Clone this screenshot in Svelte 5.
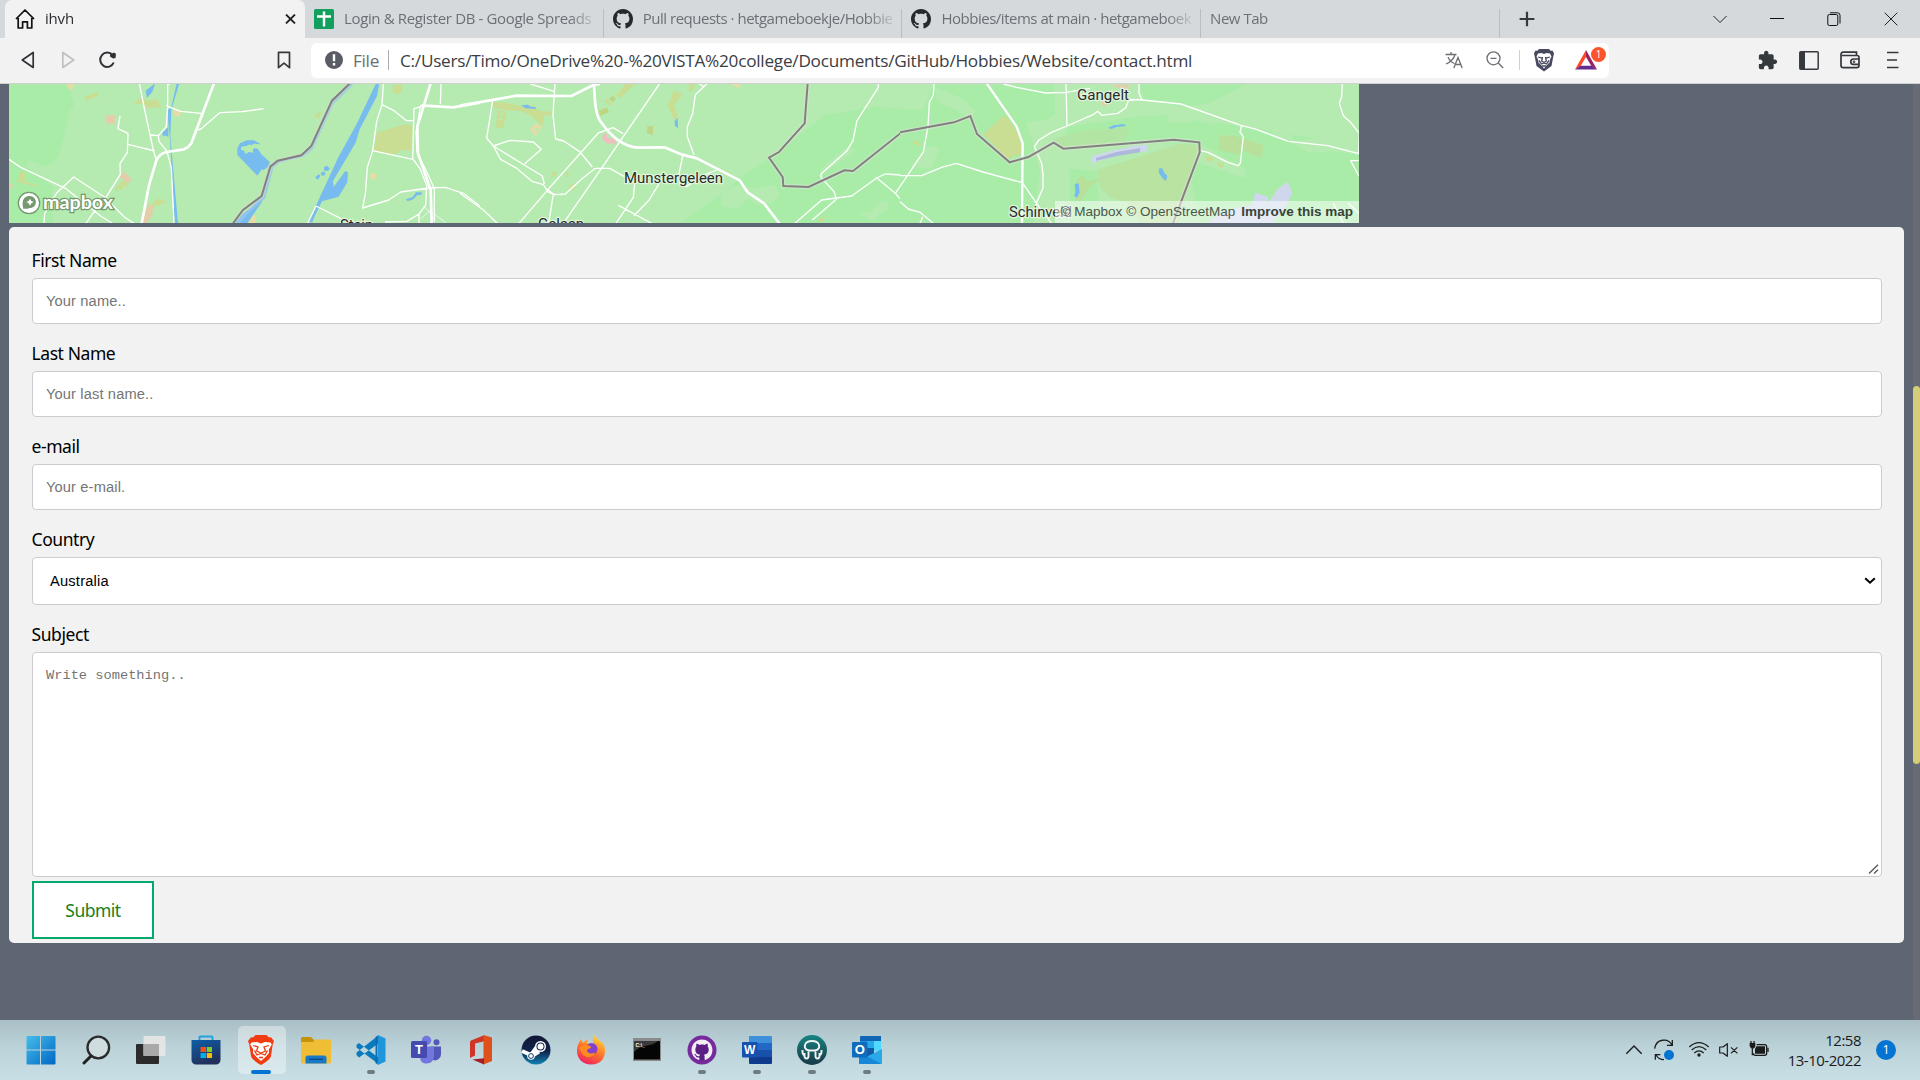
<script>
  const github =
    'M8 0C3.58 0 0 3.58 0 8c0 3.54 2.29 6.53 5.47 7.59.4.07.55-.17.55-.38 0-.19-.01-.82-.01-1.49-2.01.37-2.53-.49-2.69-.94-.09-.23-.48-.94-.82-1.13-.28-.15-.68-.52-.01-.53.63-.01 1.08.58 1.23.82.72 1.21 1.87.87 2.33.66.07-.52.28-.87.51-1.07-1.78-.2-3.64-.89-3.64-3.95 0-.87.31-1.59.82-2.15-.08-.2-.36-1.02.08-2.12 0 0 .67-.21 2.2.82.64-.18 1.32-.27 2-.27.68 0 1.36.09 2 .27 1.53-1.04 2.2-.82 2.2-.82.44 1.1.16 1.92.08 2.12.51.56.82 1.27.82 2.15 0 3.07-1.87 3.75-3.65 3.95.29.25.54.73.54 1.48 0 1.07-.01 1.93-.01 2.2 0 .21.15.46.55.38A8.013 8.013 0 0016 8c0-4.42-3.58-8-8-8z';

  const tabs = [
    { icon: 'sheet', title: 'Login & Register DB - Google Spreads', cls: 't1' },
    { icon: 'github', title: 'Pull requests · hetgameboekje/Hobbie', cls: 't2' },
    { icon: 'github', title: 'Hobbies/items at main · hetgameboek', cls: 't3' },
    { icon: '', title: 'New Tab', cls: 't4' }
  ];

  const fields = [
    { id: 'fname', label: 'First Name', hint: 'Your name..' },
    { id: 'lname', label: 'Last Name', hint: 'Your last name..' },
    { id: 'email', label: 'e-mail', hint: 'Your e-mail.' }
  ];

  const apps = [
    { id: 'start' }, { id: 'search' }, { id: 'tasks' }, { id: 'store' },
    { id: 'brave', active: true }, { id: 'files' }, { id: 'code', open: true },
    { id: 'teams' }, { id: 'office' }, { id: 'steam' }, { id: 'firefox' }, { id: 'cmd' },
    { id: 'ghdesk', open: true }, { id: 'word', open: true }, { id: 'kraken', open: true },
    { id: 'outlook', open: true }
  ];
</script>

<div class="screen">
  <header class="tabbar">
    <div class="tab active">
      <svg class="fav" width="20" height="20" viewBox="0 0 20 20" fill="none" stroke="#111" stroke-width="1.7" stroke-linejoin="round">
        <path d="M1 10 10 1l9 9M3.2 9v10h4.4v-6.2h4.8V19h4.4V9" />
      </svg>
      <span class="title">ihvh</span>
      <svg class="x" width="11" height="10" viewBox="0 0 11 10" stroke="#222" stroke-width="1.8"><path d="M1 .5l9 9M10 .5l-9 9" /></svg>
    </div>
    {#each tabs as t}
      <div class="tab {t.cls}">
        {#if t.icon === 'sheet'}
          <svg class="fav" width="20" height="20" viewBox="0 0 20 20"><rect width="20" height="20" rx="1.5" fill="#13a05f" /><path d="M8.8 2.500h2.400v3.800H17v2.400h-5.800V17.500H8.800V8.700H3V6.300h5.800z" fill="#fff" /></svg>
        {:else if t.icon === 'github'}
          <svg class="fav" width="20" height="20" viewBox="0 0 16 16"><path d={github} fill="#24292e" /></svg>
        {/if}
        <span class="title">{t.title}</span>
      </div>
    {/each}
    <svg class="plus" width="16" height="16" viewBox="0 0 16 16" stroke="#35383d" stroke-width="2.200"><path d="M8 .8v14.400M.6 8h14.800" /></svg>
    <div class="winctl">
      <svg width="14" height="14" viewBox="0 0 14 14" fill="none" stroke="#222"><path d="M.5 4 7 10.500 13.500 4" /></svg>
      <svg width="14" height="14" viewBox="0 0 14 14" fill="none" stroke="#111"><path d="M0 6.500h14" /></svg>
      <svg width="14" height="14" viewBox="0 0 14 14" fill="none" stroke="#111"><rect x=".8" y="2.500" width="10" height="11" rx="1.500" /><path d="M3 .8h7.500a2.500 2.500 0 0 1 2.500 2.500V11.500" /></svg>
      <svg width="14" height="14" viewBox="0 0 14 14" fill="none" stroke="#222"><path d="M.7.7l12.600 12.600M13.300.7.7 13.300" /></svg>
    </div>
  </header>

  <nav class="toolbar">
    <div class="navbtns">
      <svg width="14" height="18" viewBox="0 0 14 18" fill="none" stroke="#2f3237" stroke-width="1.700" stroke-linejoin="round"><path d="M12.200 1.500v15L1.300 9z" /></svg>
      <svg width="14" height="18" viewBox="0 0 14 18" fill="none" stroke="#bdbfc1" stroke-width="1.700" stroke-linejoin="round"><path d="M.8 1.500v15L11.700 9z" /></svg>
      <svg class="reload" width="19" height="18" viewBox="0 0 19 18" fill="none" stroke="#2f3237" stroke-width="2"><path d="M14.600 4.200A7 7.200 0 1 0 15.700 11.500" /><path d="M12 3.500 16 1.500l2 1.500-.5 4-2.500.5-3-2z" fill="#2f3237" stroke="none" /></svg>
      <svg class="mark" width="14" height="18" viewBox="0 0 14 18" fill="none" stroke="#35383d" stroke-width="1.700"><path d="M1.500 1.300h11v15.400L7 12.200l-5.500 4.500z" stroke-linejoin="round" /></svg>
    </div>
    <div class="omnibox">
      <svg width="18" height="18" viewBox="0 0 18 18"><circle cx="9" cy="9" r="9" fill="#5a5e64" /><path d="M7.800 3.200h2.400v7H7.800zM7.800 12h2.400v2.400H7.800z" fill="#fff" /></svg>
      <span class="scheme">File</span>
      <span class="bar"></span>
      <span class="url">C:/Users/Timo/OneDrive%20-%20VISTA%20college/Documents/GitHub/Hobbies/Website/contact.html</span>
      <div class="tools">
        <svg width="18" height="18" viewBox="0 0 18 18" fill="none" stroke="#6b6e73" stroke-width="1.300"><path d="M.5 3.500h11M6 1v2.500M10 3.500C9 7.500 5.500 11 1 13M3 6c1.500 3.500 4 5.500 6.500 6.500M8.800 17 13 6.500 17.200 17M10.200 13.500h5.600" /></svg>
        <svg width="18" height="18" viewBox="0 0 18 18" fill="none" stroke="#6b6e73" stroke-width="1.300"><circle cx="7.500" cy="7.300" r="6.500" /><path d="M12.200 12l5 5M4.500 7.300h6" /></svg>
        <span class="bar"></span>
        <svg width="22" height="24" viewBox="0 0 22 24"><path d="M6 1h10l1.500 1.700 2-.2L21 5.500l-1 4.500-1.500 8L11 23.500 3.500 18 2 10 1 5.500l1.500-3 2 .2z" fill="#47495f" /><path d="M5 5.500 8.500 5l2.500 1 2.500-1 3.500.5 1.500 3-1.500 3-.5 3-2.500 2.500L11 20.500 8 17l-2.500-2.500-.5-3-1.500-3z" fill="#fff" /><path d="M5 9l4 1.200M17 9l-4 1.200M9.500 9l-.8 4 2.300 1.500 2.300-1.500-.8-4M6 12.500l2.500 3.500L11 15l2.500 1 2.500-3.500M9 18h4" fill="none" stroke="#47495f" stroke-width="1.300" /></svg>
        <div class="bat">
          <svg width="24" height="20" viewBox="0 0 24 20"><path d="M12 0 1 19.500l5.500-3.200L12 7z" fill="#ff4724" /><path d="M12 0l11 19.500-5.500-3.200L12 7z" fill="#9e1f63" /><path d="M1 19.500h22l-5.500-3.800h-11z" fill="#662d91" /></svg>
          <span>1</span>
        </div>
      </div>
    </div>
    <div class="exts">
      <svg width="20" height="20" viewBox="1 0 23 23"><path fill="#35383d" d="M20.500 11H19V7c0-1.100-.9-2-2-2h-4V3.500C13 2.120 11.880 1 10.500 1S8 2.120 8 3.500V5H4c-1.100 0-1.990.9-1.990 2v3.800H3.500c1.490 0 2.700 1.210 2.700 2.700s-1.210 2.700-2.700 2.700H2V20c0 1.100.9 2 2 2h3.800v-1.500c0-1.490 1.210-2.700 2.700-2.700s2.700 1.210 2.700 2.700V22H17c1.100 0 2-.9 2-2v-4h1.500c1.380 0 2.500-1.120 2.500-2.500S21.880 11 20.500 11z" /></svg>
      <svg width="20" height="19" viewBox="0 0 20 19"><rect x=".8" y=".8" width="18.400" height="17.400" rx="1" fill="none" stroke="#35383d" stroke-width="1.500" /><path d="M1 1h5v17H1z" fill="#35383d" /></svg>
      <svg width="20" height="18" viewBox="0 0 20 18" fill="none" stroke="#35383d" stroke-width="1.700"><path d="M16.500 4V1.200H3a2 2 0 0 0-2 2v11.300a2.200 2.200 0 0 0 2.200 2.200H16.800a2.200 2.200 0 0 0 2.200-2.200V6.500A2 2 0 0 0 17 4.500H2" /><path d="M19 8h-5.500a2.700 2.700 0 0 0 0 5.400H19" /><circle cx="14" cy="10.700" r=".4" /></svg>
      <svg width="12" height="18" viewBox="0 0 12 18" stroke="#35383d" stroke-width="1.700"><path d="M0 1.500h11.500M0 9h10M0 16.500h11.500" /></svg>
    </div>
  </nav>

  <main class="page">
    <div class="map">
      <svg width="1350" height="139" viewBox="9 84 1350 139">
        <rect x="9" y="84" width="1350" height="139" fill="#b5ebb0" />
        <!-- western part -->
        <g transform="translate(0 80) scale(.33333)">
          <path fill="#a8eca8" d="M27 10H205L222 75 205 100 190 180 172 235 140 262 85 240 80 260 160 320 150 360 160 430H27z" />
          <g fill="#c9dd93">
            <path d="M400 72l20-18 25 8 25-5 15 25-45 2-8-12zM1130 158l85-26 22 6v75l-35-3-13 13-68-10zM58 275h18v30l40 10-5 5-57-14zM255 50l35-15 5 12-38 16zM1180 14h28l-3 22-14 7-15-8zM345 325l35-33 3 35-10-12-8 18-8-10-8 12zM440 380l38-25 22 14-45 12zM942 108l26-18-12 25z" />
          </g>
          <path fill="#e6dca6" d="M197 10h28l-14 24zM520 90l24 6-5 16-20-8zM1115 276l18 8-10 18-14-10zM745 430l10-25 14 2-4 23z" />
          <path fill="#e2cfa9" d="M318 106h28l-2 26-28-2zM370 275l26 22-12 14-26-20zM442 378l20-4-5 30-15 26h-18zM27 310l12 4-6 14-6-3z" />
          <g fill="#78bbee">
            <path d="M437 32l28-22-7 24-17 20zM530 10h8l-24 80-3 80 23 260h-10L510 180l-6-60-2-30 12-8zM487 158l18-17v30l-10-5-6 4z" />
            <path d="M712 204l8-14 20-9h22l20 12-20-2-14 8 26 8 10 16 26 24-6 14-14 10-4-4-14 20-60-62v-8zM1128 10h10l-7 38-52 100-12 40-68 115 2 18 35-48 8 4-2 30-26 43-50 14-22 45-7 18h-13l26-55 65-140 55-100z" />
            <path d="M972 262l8-5 9 8-4 7-12 1zM962 280l8-6 7 6-3 6-9 1zM947 290l9-7 5 4-6 11-7-1zM1218 358l20-7 10-14h17v7l-14 2-11 12-17 6zM700 430l30-30 22-15 32-40 2 20-44 65z" />
          </g>
          <path fill="#b5ebb0" d="M724 200l16-3 10-4 6 7 10 2-8 8 2 8-14-2-10 6-3-9-10-4z" />
          <path fill="none" stroke="#92c5ee" stroke-width="8" d="M1056 12 998 68l-62 136-26 22-72 18-22 18-24 90-55 50-32 40" />
          <path fill="none" stroke="#d0dfca" stroke-width="16" opacity=".5" d="M1050 10 996 62l-62 136-30 28-71 16-22 18-26 88-56 42-30 40" />
          <path fill="none" stroke="#83807f" stroke-width="6" d="M1050 10 996 62l-62 136-30 28-71 16-22 18-26 88-56 42-30 40" />
          <g fill="none" stroke="#fff" stroke-linejoin="round">
            <path stroke-width="4" d="M418 10l16 80 26 120 8 28M503 10v68l-4 62-24 27-23-2M475 167l2 17 24 30 13 50 8 166M511 10l-8 5M499 78l44 16 61 6M593 150l10-3 56-49 68-3 64-9M360 108l-6 38 30 14-2 57-22 34 1 32-45 72M384 193l80 20M27 238l35 24 136 64 104 82 35 22M132 430l2-30 35-60 52-49 92 60 60 60 28 19M258 430l25-36 20-34M1150 10l-4 64 36 18 38 30h20M1146 74l-16 50-12 88 120 26M1118 212l-16 50-6 80-8 42 78-24 36-24 84-12 50-2 54 18 50 38M948 378l80 40 26 12M948 378l-25 52M1155 426l66-2 36-22M1270 78l-28 8-4 150 22 30 20 50-3 60-20 26v28M1323 10l-2 62M1262 76l-14 80 3 60 34 70 18 40v100" />
            <path stroke-width="2" d="M1270 380l68 48M1263 416l24-22 14 24" />
            <path stroke-width="8" d="M642 10l-68 180q-10 14-22 18l-52 8q-22 5-31 25l-22 75-22 114M1292 10l-40 130 2 80 38 110 3 100M1264 76l95 6 81-14" />
          </g>
          <g>
            <circle cx="87" cy="369" r="34" fill="#75996f" /><circle cx="87" cy="369" r="30" fill="#fff" />
            <path d="M70 386c-5-20-2-37 18-38 27 1 26 37 0 36-7 4-11 2-18 2z" fill="#75996f" /><path d="M90 356l4 7 7 3-7 4-4 7-4-7-7-4 7-3z" fill="#fff" />
          </g>
        </g>
        <!-- central part -->
        <g transform="translate(460 80) scale(.33333)">
          <path fill="#a8eca8" d="M660 430l140-100 40-35 90-60 165-130 150-25 135 10V430z" />
          <path fill="#b5ebb0" d="M785 335l50-20 50 10 60-10 15 30-25 25-40 5-30-20-30 30-50-5zM1195 400l40-5 30-32 25 5-10 20-45 35zM1080 270l80-70 25 10-35 30-65 40z" />
          <g fill="#c9dd93"><path d="M98 65l40 3 50 12 30-5 22 18 36 2v10l-24 2-4 32-40-35-22-10-50-4-38-8zM112 90l28 5-10 50-22-3zM475 38l20-26h30l-45 42-14-8zM640 30l28 14-26 30 13 40-12 5-20-45 10-18zM688 10h18l-10 25-10-3zM270 292l10-20 10 5-4 12zM310 270l20 14-8 7zM326 320l12-8 10 10-14 12zM430 62l12-4 14 14-4 6zM1070 425l28-20-10 20z" /></g>
          <path fill="#bfd584" d="M416 92l25-10 5 14-25 12zM447 58l10-12 11 11-11 10zM562 139h17v25l-18-3zM1360 180l20 12v10l-20-10z" />
          <path fill="#e6dca6" d="M210 150l16-20 20 10-18 28zM806 10h35l-3 15z" />
          <path fill="#b5ebb0" d="M222 148l10-5 5 5-8 9zM120 97l10 2-2 8-10-2zM118 112l10 2-2 8-10-2z" />
          <path fill="#efbfbf" d="M432 160l9 3v8l12 5 16 2-4 16-10-4-12 2-18-16z" />
          <path fill="#78bbee" d="M183 76l20-2 10 6 14 1v6l-30-2zM644 122l9-8 1 30-9-6z" />
          <g fill="none" stroke="#fff" stroke-linejoin="round">
            <path stroke-width="4" d="M212 12l70 22M285 10l-6 95 8 72M98 62 80 174l20 24 22 40 50 28 44 38 34 10 14 22 22 8 30-2 50-46 40-31h43l75 42-4 45-56 84M100 198l50-17 70 5 24 22-50 43M100 198l147 90 6 24M262 328l18 14-14 88M287 177l24 6 48 32 38 46M177 430l90-105 148-166 44-16 30 18M310 430l118-170 170-248M475 376l100 54M522 407l46-48 34-56 50-20M668 228l-12 58 4 30 20 4 40-30 50-20M740 12l-34 32-8 56-16 40v30l20 54M718 12l14 8M1255 10v12l-64 100-12 60-18 30-78 70v10l40 44 6 22-72 62M1005 430l80-70 90-12 75-54 26-12 104 6M1380 230l-74 110M1248 292l58 48 40 46 34 15M0 340l70 50 42 40" />
            <path stroke-width="8" d="M0 77l170-30 164 1 66-33 20-3M402 12c2 60 6 100 24 118 20 30 60 72 112 73l75-1 54 22 44 11 128 66 25 37 48 32 55 72" />
          </g>
          <path fill="none" stroke="#e0e6dc" stroke-width="14" opacity=".5" d="M1043 10l-9 120-77 86-30 17 41 58 2 27 76 3 107-50 26 2 146-116 57-11" />
          <path fill="none" stroke="#83807f" stroke-width="6" d="M1043 10l-9 120-77 86-30 17 41 58 2 27 76 3 107-50 26 2 146-116 57-11" />
        </g>
        <!-- eastern part -->
        <g transform="translate(900 80) scale(.33333)">
          <path fill="#a8eca8" d="M0 95 70 90 100 10H460L466 100 430 130 380 140 400 190 420 280 400 430H60L0 370zM720 10H1040L930 70 850 80 730 60zM505 140l200-30 100-5 570 90V430H900L850 190 480 190zM510 265l80 10 10 155h-90z" />
          <path fill="#b5ebb0" d="M105 20l80 35 45 40-30 15-30-20-60-25zM380 125l70-6-10 60-50-10zM805 90l80 0 60 25v20l-60-15-20 10-60-5zM1060 105l40-5 10 35 60 5 10 45 100-18 95 22v35l-80-10-70 5-60-40-40-10-20-35zM30 260l50-60 40 2-25 65zM850 200l60-5 130 75-5 25-150-50-35-5z" />
          <path fill="#b8e3a0" d="M590 270l250-78 55 5-60 235H720l-30-60-60-20-30-30z" />
          <path fill="#c9dd93" d="M250 163l60-56 12 5 34 52 12 54-45 20zM40 178l24 14-5 8-20-10zM920 225l22 10-8 12-16-6zM954 242l17 14-4 7-16-5z" />
          <path fill="#b9e09b" d="M958 166l50 2 20 10-8 46-65-15zM1030 175l60 20-5 40-60-25zM530 300l20-15 10 20 45-10-40 30-20 40-20-5z" />
          <path fill="#b2e5a3" d="M460 178l80-25 145-12-10 45-190 18z" />
          <path fill="#e2cfa9" d="M640 14h46v25l-20-15-24-2zM600 65l16-8 6 18-14 3z" />
          <path fill="#cfd7ed" d="M576 228l70-18 55-12 40-4v20l-60 6-55 15-42 12-6 12zM920 430l40-30 60-20 35-2 10-40 40 12-5 25 35-50 28-20 14 35-20 40-40 50z" />
          <path fill="#aeb8db" d="M588 234l62-18 70-12v13l-65 10-67 15z" />
          <path fill="#78bbee" d="M624 144l16-8 32-4 6 6-28 3-15 6zM776 266l10-2 7 14 9 10-4 14-8-4-13-18zM524 312l12-2 3 28-9 16-7-6 3-15z" />
          <g fill="none" stroke="#fff" stroke-linejoin="round">
            <path stroke-width="4" d="M102 10l-2 35-12 22-4 73-14 76L0 320M0 287h65l60-25 44-12 80 26 118 32 48 70 40 52M0 365l25 22 35 10 40 33M68 410l-8 20M310 12l40 10 87 17 61-2 72-12M498 10l3 128M717 10v30l8 18-40 4-8 22-24 16-48 6-12-12-12 9-80 35-48 20-36 22-14 20 22 50 4 34v40l-26 60M688 58l40 2 115 12 180 64 46 12 96 36 118 13 94 24M1025 136l-5 20 10 14-9 80-7 7-30-10-60-30-26-6M1327 10l-2 40-7 20 12 37 20 18 28 35-2 60M1376 242h-24l24 45M1300 370l30 60M1345 370l34 32" />
            <path stroke-width="7" d="M260 10l90 130 18 50-2 240" />
          </g>
          <path fill="none" stroke="#e0e6dc" stroke-width="14" opacity=".5" d="M0 157l162-30 49-19 20 54 98 85 56-16 76-43 29 18 331-27 77 8 1 30-80 213" />
          <path fill="none" stroke="#83807f" stroke-width="6" d="M0 157l162-30 49-19 20 54 98 85 56-16 76-43 29 18 331-27 77 8 1 30-80 213" />
        </g>
        <g class="places">
          <text x="624" y="182.500" textLength="99" lengthAdjust="spacingAndGlyphs">Munstergeleen</text>
          <text x="1077" y="100" textLength="52" lengthAdjust="spacingAndGlyphs">Gangelt</text>
          <text x="1009" y="217" textLength="63" lengthAdjust="spacingAndGlyphs">Schinveld</text>
          <text x="340" y="230" textLength="33" lengthAdjust="spacingAndGlyphs">Stein</text>
          <text x="538" y="229" textLength="46" lengthAdjust="spacingAndGlyphs">Geleen</text>
        </g>
        <text class="mapbox" x="43" y="208.500" textLength="70" lengthAdjust="spacingAndGlyphs">mapbox</text>
      </svg>
      <div class="attrib"><span>© Mapbox</span><span>© OpenStreetMap</span><b>Improve this map</b></div>
    </div>

    <form class="form" onsubmit={(e) => e.preventDefault()}>
      {#each fields as f}
        <div class="field">
          <label for={f.id}>{f.label}</label>
          <input id={f.id} type="text" placeholder={f.hint} />
        </div>
      {/each}
      <div class="field">
        <label for="country">Country</label>
        <div class="pick">
          <select id="country"><option>Australia</option></select>
          <svg width="12" height="8" viewBox="0 0 12 8" fill="none" stroke="#000" stroke-width="2"><path d="M1.200 1.300 6 5.700l4.800-4.400" /></svg>
        </div>
      </div>
      <div class="field last">
        <label for="subject">Subject</label>
        <div class="area">
          <textarea id="subject" placeholder="Write something.."></textarea>
          <svg width="11" height="10" viewBox="0 0 11 10" stroke="#555" stroke-width="1.300"><path d="M1 9.500 10 .8M6 9.500l4-3.800" /></svg>
        </div>
      </div>
      <button type="submit">Submit</button>
    </form>
    <div class="scroll"><div class="thumb"></div></div>
  </main>

  <footer class="taskbar">
    <div class="apps">
      {#each apps as a}
        <div class="app" class:active={a.active} class:open={a.open}>
          <svg width="30" height="30" viewBox="0 0 30 30">
            {#if a.id === 'start'}
              <defs><linearGradient id="win" x1="0" y1="0" x2="1" y2="1"><stop offset="0" stop-color="#46bdea" /><stop offset="1" stop-color="#0067c5" /></linearGradient></defs>
              <path fill="url(#win)" d="M.500 2a1 1 0 0 1 1-1h12.500v13.500H.500zM15 1H28.500a1 1 0 0 1 1 1v12.500H15zM.500 15.500h13.500v14H1.500a1 1 0 0 1-1-1zM15 15.500h14.500v13a1 1 0 0 1-1 1H15z" />
            {:else if a.id === 'search'}
              <circle cx="17.300" cy="12.500" r="10.800" fill="#cfdde0" stroke="#2b2b2b" stroke-width="2.300" /><path d="M10 21 3 28" stroke="#222" stroke-width="3" stroke-linecap="round" />
            {:else if a.id === 'tasks'}
              <rect x="0" y="9" width="23" height="20" rx="1" fill="#2b2b2b" /><rect x="7.500" y="1" width="22" height="20" rx="1" fill="#e6e6e6" opacity=".93" /><rect x="7.500" y="9" width="15.500" height="12" fill="#a9a9a9" />
            {:else if a.id === 'store'}
              <defs><linearGradient id="st" x1="0" y1="0" x2=".4" y2="1"><stop offset="0" stop-color="#0b5fa8" /><stop offset="1" stop-color="#22305c" /></linearGradient></defs>
              <path d="M8.500 6V2.300q0-.8.8-.8h11.400q.8 0 .8.8V6" fill="none" stroke="#23a3dd" stroke-width="1.900" /><path d="M.5 5h29v20a4.500 4.500 0 0 1-4.500 4.500H5A4.500 4.500 0 0 1 .5 25z" fill="url(#st)" />
              <path d="M9.500 12H15v5H9.500z" fill="#f1511b" /><path d="M15.800 12H21v5h-5.200z" fill="#80cc28" /><path d="M9.500 18H15v5H9.500z" fill="#00adef" /><path d="M15.800 18H21v5h-5.200z" fill="#fbbc09" />
            {:else if a.id === 'brave'}
              <path d="M9.500 0h11l2.500 2.500 2-.3L28 6l-1.300 3.500L25 21c-.7 3-5 6-10 9C10 27 5.700 24 5 21L3.300 9.500 2 6l3-3.800 2 .3z" fill="#f03c10" />
              <path d="M5.500 7.500 11 7l4 1.500L19 7l5.500.5 1.300 2-3 5 .2 3.500-3.500 4-4.500 4-4.500-4L7 18l.2-3.500-3-5z" fill="#fff" /><path d="M7 10.500l5 1.500-1.500 4 4.500 2 4.500-2-1.500-4 5-1.500M8.500 15.500l2.500 4.500 4-1.500 4 1.500 2.500-4.500M13 22.500h4" fill="none" stroke="#f03c10" stroke-width="1.300" />
            {:else if a.id === 'files'}
              <path d="M0 3.500A1.500 1.500 0 0 1 1.500 2H10l3 3v8H0z" fill="#c69208" /><path d="M0 7h12l2-2.500h15.500a.5.500 0 0 1 .5.500v22.500a1 1 0 0 1-1 1H1a1 1 0 0 1-1-1z" fill="#efbe35" /><path d="M4.500 28.500V23a2.500 2.500 0 0 1 2.500-2.500h16a2.500 2.500 0 0 1 2.500 2.500v5.500z" fill="#1879c6" /><path d="M8 24.300h14" stroke="#0c4b87" stroke-width="1.400" />
            {:else if a.id === 'code'}
              <path d="M.5 10 3 8l20 15v6.500L.5 12.500zM.5 20l2.500 2.500L23 8V0L.5 17.500z" fill="#0a7abf" /><path d="M22 0l7.500 3.500v23L22 30z" fill="#1f96dc" /><path d="M21.500.5v29l-2-1.500V2z" fill="#0f6cb0" />
            {:else if a.id === 'teams'}
              <circle cx="15.500" cy="5.500" r="4.700" fill="#7177dc" /><circle cx="25.500" cy="7.300" r="3" fill="#5258b8" /><path d="M20 11.500h10v8a6 6 0 0 1-8 5.500z" fill="#5258b8" /><path d="M9 11.500h14v9c0 5-3 8-7.500 8S9 26 9 21z" fill="#7177dc" /><rect x="0" y="6" width="16" height="17" rx="1.500" fill="#444aae" /><text x="8" y="19" text-anchor="middle" class="g">T</text>
            {:else if a.id === 'office'}
              <path d="M18 .3 5 5.500q-1 .5-1 1.700V23l5-2.500V8.500l9-2.200z" fill="#cf3628" /><path d="M17.500 0 26 2.500V26l-8.500 3.500z" fill="#e0501b" /><path d="M6.500 24.500 18 23.300V29.500z" fill="#a51d28" />
            {:else if a.id === 'steam'}
              <defs><linearGradient id="sm" x1="0" y1="0" x2="0" y2="1"><stop offset="0" stop-color="#111636" /><stop offset=".55" stop-color="#11254d" /><stop offset="1" stop-color="#1284b4" /></linearGradient></defs>
              <circle cx="15" cy="15" r="14.500" fill="url(#sm)" /><path d="M1 16l9 4 5.500-7.500M10 21.500l8-5" stroke="#fff" stroke-width="4" fill="none" /><circle cx="19.500" cy="11.500" r="5.500" fill="#fff" /><circle cx="19.500" cy="11.500" r="4" fill="#11254d" /><circle cx="19.500" cy="11.500" r="3" fill="#fff" /><circle cx="10" cy="21" r="3.800" fill="#fff" /><circle cx="10" cy="21" r="2.400" fill="none" stroke="#12406b" />
            {:else if a.id === 'firefox'}
              <defs><linearGradient id="ff" x1=".8" y1="0" x2=".3" y2="1"><stop offset="0" stop-color="#ffe03a" /><stop offset=".5" stop-color="#ff7a28" /><stop offset="1" stop-color="#ef2063" /></linearGradient></defs>
              <path d="M19 0c1 4 4 4 6 7l2 1c3 5 2.500 12-.5 16.500C24 28 20 29.500 15 29.500 7 29.500 1 24 1 16c0-4 1-7 2.500-9l1-3L7 8q2-3 5-3.500l-1 4 7 .5c-2-3-1-7 1-9z" fill="url(#ff)" /><circle cx="15.500" cy="14" r="6" fill="#8441cf" /><path d="M3 13c3-3 5-2 7-3 3 0 5 1 5 2.500s-4 1-4 3c0 3 5 4 8 2-1 5-9 7-13 1z" fill="#ff8a1f" />
            {:else if a.id === 'cmd'}
              <rect x="1" y="3" width="28" height="23" fill="#8b8b8d" /><path d="M2 6h26v18.500H2z" fill="#050505" /><path d="M2 6h24C20 12 9 9 2 17z" fill="#3a3a3a" /><text x="3.500" y="11.500" class="g prompt">C:\_</text>
            {:else if a.id === 'ghdesk'}
              <circle cx="15" cy="15" r="14.500" fill="#762a9c" /><circle cx="15" cy="15" r="10.500" fill="#5b1e85" /><path transform="translate(4.500 4.500) scale(1.312)" d={github} fill="#f3edf6" />
            {:else if a.id === 'word'}
              <path d="M7 1h22a1 1 0 0 1 1 1v6H7z" fill="#3f8fdb" /><path d="M7 8h23v7H7z" fill="#2368c4" /><path d="M7 15h23v7H7z" fill="#1850ab" /><path d="M7 22h23v6a1 1 0 0 1-1 1H8a1 1 0 0 1-1-1z" fill="#103b8c" /><rect x="0" y="7" width="15.500" height="15.500" rx="1" fill="#1751b0" /><text x="7.700" y="19" text-anchor="middle" class="g w">W</text>
            {:else if a.id === 'kraken'}
              <defs><linearGradient id="kr" x1="0" y1="0" x2="0" y2="1"><stop offset="0" stop-color="#168581" /><stop offset="1" stop-color="#193847" /></linearGradient></defs>
              <circle cx="15" cy="15" r="15" fill="url(#kr)" /><path d="M9 14c-2-2-2-8 6-8s8 6 6 8c-1 2-11 2-12 0zM11.500 15.500v5.500q0 2.500-2 2.500t-2-2.500V18M18.500 15.500v5.500q0 2.500 2 2.500t2-2.500V18M5.500 15q-.5 4 2 5.500M24.500 15q.5 4-2 5.500" fill="none" stroke="#f4f4f4" stroke-width="1.900" />
            {:else}
              <path d="M8 2a1 1 0 0 1 1-1h20v14H8z" fill="#1066b4" /><path d="M8 6h7v7H8z" fill="#1490df" /><path d="M15 6h7v7h-7z" fill="#28a8ea" /><path d="M22 6h7v10h-7z" fill="#50d9ff" /><path d="M8 13h14v8H8z" fill="#0f5da8" /><path d="M16 21l14-7v14a1 1 0 0 1-1 1H8a1 1 0 0 1-1-1v-6z" fill="#2aa8e8" /><path d="M7 17l22.500 12H8a1 1 0 0 1-1-1z" fill="#1787d8" /><rect x="0" y="7" width="15.500" height="15.500" rx="1" fill="#0f6cbd" /><text x="7.700" y="19" text-anchor="middle" class="g">O</text>
            {/if}
          </svg>
          <i></i>
        </div>
      {/each}
    </div>
    <div class="tray">
      <svg width="20" height="24" viewBox="72 84 60 72" fill="none" stroke="#1b1b1b" stroke-width="4"><path d="M79 131l23-23 23 23" /></svg>
      <svg class="sync" width="24" height="24" viewBox="156 84 72 72" fill="none" stroke="#1b1b1b" stroke-width="3.800"><path d="M164 116c4-30 40-34 53-10M217 90v16h-16M166 149v-15h15M168 135c4 7 12 14 24 14" /><circle cx="207" cy="135" r="15" fill="#0573d1" stroke="none" /></svg>
      <svg class="wifi" width="24" height="24" viewBox="261 84 72 72" fill="none" stroke="#1b1b1b" stroke-width="3.800"><path d="M268 111q29-26 58 0M275 120q22-20 44 0M283 129q14-13 28 0" /><circle cx="297" cy="135" r="5" fill="#1b1b1b" stroke="none" /></svg>
      <svg width="24" height="24" viewBox="351 84 72 72" fill="none" stroke="#1b1b1b" stroke-width="3.500" stroke-linejoin="round"><path d="M359 111h10l13-10v38l-13-10h-10zM393 112l19 18M412 112l-19 18" /></svg>
      <svg width="24" height="24" viewBox="441 84 72 72" fill="none" stroke="#1b1b1b" stroke-width="3.800"><path d="M470 104h24a6 6 0 0 1 6 6v20a6 6 0 0 1-6 6h-28a6 6 0 0 1-6-6" /><path d="M449 99h17v10q-2 7-8 7t-9-7zM469 109h26v22h-30v-14z" fill="#1b1b1b" stroke="none" /><path d="M453 93v9M462 93v9M457 114v22M504 113v13" /></svg>
      <div class="clock"><span>12:58</span><span>13-10-2022</span></div>
      <div class="badge">1</div>
    </div>
  </footer>
</div>

<style>
  :global(body) { margin: 0; overflow: hidden; }
  * { box-sizing: border-box; }
  .screen { width: 1920px; height: 1080px; display: flex; flex-direction: column; font-family: 'Open Sans', 'Noto Sans', sans-serif; background: #5f6673; }
  svg { display: block; flex: none; }

  .tabbar { height: 38px; display: flex; background: #d5d9dc; padding-left: 5px; }
  .tab { width: 298.7px; flex: none; display: flex; align-items: center; gap: 10px; padding-left: 9px; color: #6b7076; font-size: 15px; letter-spacing: -.48px; position: relative; }
  .tab::after { content: ''; position: absolute; right: 0; top: 9px; bottom: 0; width: 1px; background: #b9bdc0; }
  .tab.active { width: 300px; background: #f2f2f2; border-radius: 7px 7px 0 0; padding-left: 10px; color: #2b2d30; letter-spacing: -.2px; }
  .tab.active::after { display: none; }
  .title { width: 256px; white-space: nowrap; line-height: 22px; margin-bottom: 2px; mask-image: linear-gradient(90deg, #000 225px, transparent 256px); }
  .t1 .title { letter-spacing: -.36px; }
  .t4 { padding-left: 9px; }
  .active .title { width: 230px; }
  .x { margin-left: 0; }
  .plus { margin: 11px 0 0 19px; }
  .winctl { margin: 12px 22px 0 auto; display: flex; gap: 43px; }

  .toolbar { height: 46px; display: flex; background: #f2f2f2; border-bottom: 1px solid #d0d0d0; align-items: center; padding-bottom: 1px; }
  .navbtns { width: 311px; padding: 0 20px 0 21px; display: flex; gap: 27px; }
  .navbtns .reload { margin-left: -5px; }
  .navbtns .mark { margin-left: auto; }
  .omnibox { width: 1298px; height: 35px; background: #fff; border-radius: 6px; display: flex; align-items: center; padding: 0 11px 0 14px; color: #6a6e73; font-size: 17.200px; white-space: nowrap; }
  .scheme { margin-left: 10px; width: 27px; letter-spacing: -.3px; }
  .bar { width: 1px; height: 20px; background: #aaadb0; margin: 0 11px 0 8px; }
  .url { color: #3a3d42; letter-spacing: -.25px; }
  .tools { margin-left: auto; display: flex; align-items: center; }
  .tools > svg:nth-child(2) { margin-left: 23px; }
  .tools .bar { margin: 0 13px 0 15px; background: #cfcfcf; }
  .bat { position: relative; margin-left: 19px; width: 24px; }
  .bat span { position: absolute; left: 17px; top: -3px; width: 15px; height: 15px; border-radius: 50%; background: #fb542b; color: #fff; font-size: 10px; line-height: 15px; text-align: center; }
  .exts { margin-left: auto; padding-right: 21px; display: flex; align-items: center; gap: 21px; }
  .exts svg:last-child { margin-left: 6px; }

  .page { height: 936px; padding-left: 9px; position: relative; background: #5f6673; }
  .map { width: 1350px; height: 139px; position: relative; overflow: hidden; }
  .places text { font: 400 15.500px Roboto, sans-serif; fill: #2b2b2b; stroke: #dff5dc; stroke-width: 2.500px; paint-order: stroke; }
  .mapbox { font: 700 19px Lato, sans-serif; fill: #fff; stroke: #75996f; stroke-width: 2.500px; paint-order: stroke; }
  .attrib { position: absolute; right: 0; bottom: 0; width: 304px; height: 22px; background: rgba(255, 255, 255, .5); font: 13.500px/21px 'Liberation Sans', sans-serif; color: #4b564b; display: flex; justify-content: flex-end; padding-right: 6px; white-space: nowrap; }
  .attrib span:first-child { margin-right: 4px; }
  .attrib b { margin-left: 6px; color: #38433a; }

  .form { margin-top: 4px; width: 1895px; height: 716px; background: #f2f2f2; border-radius: 5px; padding: 21px 22px 0 23px; }
  .field { margin-bottom: 17px; }
  .field.last { margin-bottom: 4px; }
  label { display: block; height: 24px; margin: 0 0 6px -.5px; font: 17.500px/24px 'Noto Sans', sans-serif; color: #000; letter-spacing: -.42px; }
  input, select, textarea { display: block; width: 100%; border: 1px solid #ccc; border-radius: 4px; background: #fff; font: 14.670px 'Liberation Sans', sans-serif; letter-spacing: .13px; padding: 0 13px; outline: 0; }
  input { height: 46px; }
  input::placeholder, textarea::placeholder { color: #757575; opacity: 1; }
  select { height: 48px; appearance: none; padding-left: 17px; color: #000; letter-spacing: .2px; }
  .pick, .area { position: relative; }
  .pick svg { position: absolute; right: 6px; top: 20px; }
  textarea { height: 225px; resize: none; font: 13.700px/17px 'Liberation Mono', monospace; letter-spacing: 0; padding: 14px 13px; }
  .area svg { position: absolute; right: 3px; bottom: 3px; }
  button { display: block; width: 122px; height: 58px; border: 2px solid #04aa6d; background: #fff; color: #188018; font: 17.500px 'Noto Sans', sans-serif; letter-spacing: -.5px; padding: 0; }
  .scroll { position: absolute; right: 0; top: 0; width: 7px; height: 936px; background: #686b76; }
  .thumb { margin-top: 302px; height: 378px; border-radius: 4px; background: #d4cd7a; }

  .taskbar { height: 60px; background: linear-gradient(#a9bfc5, #bad2d8 45%, #c7dfe5); display: flex; }
  .apps { display: flex; padding-left: 13.500px; }
  .app { width: 55.050px; height: 60px; display: flex; flex-direction: column; align-items: center; padding-top: 15px; position: relative; z-index: 0; }
  .app i { width: 8px; height: 4px; border-radius: 2px; margin-top: 5px; }
  .open i { background: #6e7c82; }
  .active i { width: 20px; background: #0573d1; }
  .app.active::before { content: ''; position: absolute; z-index: -1; left: 4px; top: 6px; width: 48px; height: 48px; border-radius: 5px; background: rgba(255, 255, 255, .38); }
  .g { font: 700 13px 'Liberation Sans', sans-serif; fill: #fff; }
  .g.w { font-size: 12px; }
  .g.prompt { font-size: 5px; }
  .tray { margin-left: auto; display: flex; align-items: center; color: #1b1b1b; padding-right: 24px; }
  .sync { margin-left: 8px; }
  .wifi { margin-left: 11px; }
  .wifi ~ svg { margin-left: 6px; }
  .clock { width: 90px; display: flex; flex-direction: column; align-items: flex-end; font-size: 15px; line-height: 20px; letter-spacing: -.5px; margin-bottom: 1px; }
  .badge { width: 20px; height: 20px; margin-left: 15px; border-radius: 50%; background: #0573d1; color: #fff; text-align: center; font-size: 12.500px; line-height: 20px; }
</style>
